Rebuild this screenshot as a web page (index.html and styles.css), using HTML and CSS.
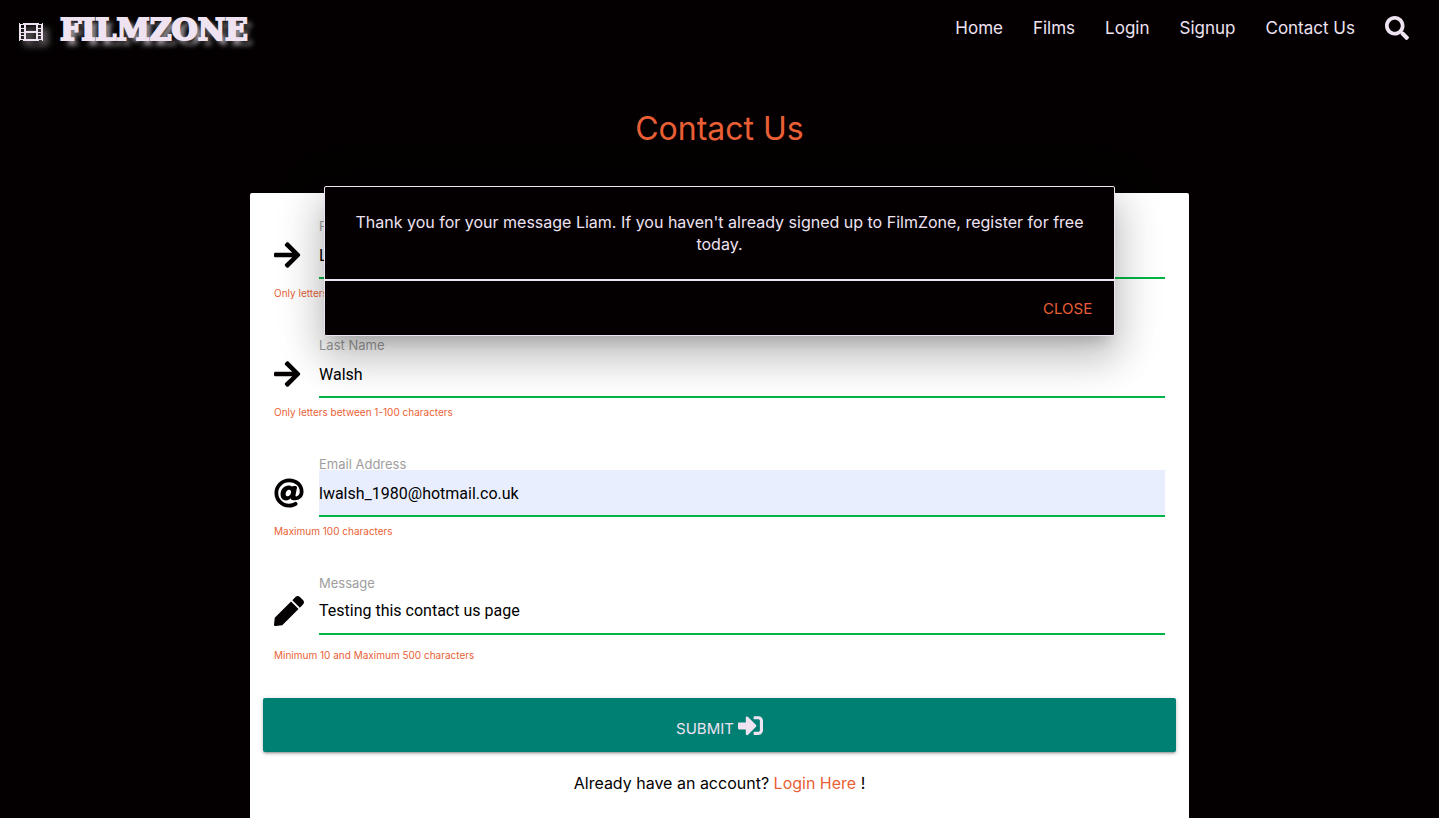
FILE: index.html
```html
<!DOCTYPE html>
<html lang="en">
<head>
<meta charset="utf-8">
<meta name="viewport" content="width=device-width, initial-scale=1">
<title>FilmZone - Contact Us</title>
<link rel="stylesheet" href="styles.css">
</head>
<body>
<header class="navbar">
  <a class="brand" href="#">
    <svg class="brand-icon" viewBox="0 0 24 18" aria-hidden="true"><path fill-rule="evenodd" d="M0 0H1V1H4V0H20V1H23V0H24V18H23V17H20V18H4V17H1V18H0ZM7 2V8H17V2ZM7 10V16H17V10ZM2 2V5H5V2ZM2 6V9H5V6ZM2 10V12H5V10ZM2 13V16H5V13ZM19 2V5H22V2ZM19 6V9H22V6ZM19 10V12H22V10ZM19 13V16H22V13Z"/></svg>
    <span class="brand-name">FILMZONE</span>
  </a>
  <nav class="nav-links">
    <a href="#">Home</a>
    <a href="#">Films</a>
    <a href="#">Login</a>
    <a href="#">Signup</a>
    <a href="#">Contact Us</a>
    <a class="nav-search" href="#" aria-label="Search"><svg viewBox="0 0 512 512" aria-hidden="true"><path d="M505 442.7L405.3 343c-4.5-4.5-10.6-7-17-7H372c27.6-35.3 44-79.7 44-128C416 93.1 322.9 0 208 0S0 93.1 0 208s93.1 208 208 208c48.3 0 92.7-16.4 128-44v16.3c0 6.4 2.5 12.5 7 17l99.7 99.7c9.4 9.4 24.6 9.4 33.9 0l28.3-28.3c9.4-9.4 9.4-24.6.1-34zM208 336c-70.7 0-128-57.2-128-128 0-70.7 57.2-128 128-128 70.7 0 128 57.2 128 128 0 70.7-57.2 128-128 128z"/></svg></a>
  </nav>
</header>

<main class="page">
  <h1 class="title">Contact Us</h1>
  <form class="card">
    <div class="field">
      <label class="field-label" for="first">First Name</label>
      <svg class="field-icon" viewBox="0 0 512 512" aria-hidden="true"><path d="M190.5 66.9l22.2-22.2c9.4-9.4 24.6-9.4 33.9 0L441 239c9.4 9.4 9.4 24.6 0 33.9L246.6 467.3c-9.4 9.4-24.6 9.4-33.9 0l-22.2-22.2c-9.5-9.5-9.3-25 .4-34.3L311.4 296H24c-13.3 0-24-10.7-24-24v-32c0-13.3 10.7-24 24-24h287.4L190.9 101.2c-9.8-9.3-10-24.8-.4-34.3z"/></svg>
      <input class="control" id="first" type="text" value="Liam">
      <span class="helper">Only letters between 1-100 characters</span>
    </div>
    <div class="field">
      <label class="field-label" for="last">Last Name</label>
      <svg class="field-icon" viewBox="0 0 512 512" aria-hidden="true"><path d="M190.5 66.9l22.2-22.2c9.4-9.4 24.6-9.4 33.9 0L441 239c9.4 9.4 9.4 24.6 0 33.9L246.6 467.3c-9.4 9.4-24.6 9.4-33.9 0l-22.2-22.2c-9.5-9.5-9.3-25 .4-34.3L311.4 296H24c-13.3 0-24-10.7-24-24v-32c0-13.3 10.7-24 24-24h287.4L190.9 101.2c-9.8-9.3-10-24.8-.4-34.3z"/></svg>
      <input class="control" id="last" type="text" value="Walsh">
      <span class="helper">Only letters between 1-100 characters</span>
    </div>
    <div class="field">
      <label class="field-label" for="email">Email Address</label>
      <svg class="field-icon" viewBox="0 0 512 512" aria-hidden="true"><path d="M256 8C118.941 8 8 118.919 8 256c0 137.059 110.919 248 248 248 48.154 0 95.342-14.14 135.408-40.223 12.005-7.815 14.625-24.288 5.552-35.372l-10.177-12.433c-7.671-9.371-21.179-11.667-31.373-5.129C325.92 429.757 291.314 440 256 440c-101.458 0-184-82.542-184-184S154.542 72 256 72c100.139 0 184 57.619 184 160 0 38.786-21.093 79.742-58.17 83.693-17.349-.454-16.91-12.857-13.476-30.024l23.433-121.11C394.653 149.75 383.308 136 368.225 136h-44.981a13.518 13.518 0 0 0-13.432 11.993l-.01.092c-14.697-17.901-40.448-21.775-59.971-21.775-74.58 0-137.831 62.234-137.831 151.46 0 65.303 36.785 105.87 96 105.87 26.984 0 57.369-15.637 74.991-38.333 9.522 34.104 40.613 34.104 70.71 34.104C462.609 379.41 504 307.798 504 232 504 95.653 394.023 8 256 8zm-21.68 304.43c-22.249 0-36.07-15.623-36.07-40.771 0-44.993 30.779-72.729 58.63-72.729 22.292 0 35.601 15.241 35.601 40.77 0 45.061-33.875 72.73-58.161 72.73z"/></svg>
      <input class="control control-filled" id="email" type="email" value="lwalsh_1980@hotmail.co.uk">
      <span class="helper">Maximum 100 characters</span>
    </div>
    <div class="field field-message">
      <label class="field-label" for="message">Message</label>
      <svg class="field-icon" viewBox="0 0 512 512" aria-hidden="true"><path d="M290.74 93.24l128.02 128.02-277.99 277.99-114.14 12.6C11.35 513.54-1.56 500.62.14 485.34l12.7-114.22 277.9-277.88zm207.2-19.06l-60.11-60.11c-18.75-18.75-49.16-18.75-67.91 0l-56.55 56.55 128.02 128.02 56.55-56.55c18.75-18.76 18.75-49.16 0-67.91z"/></svg>
      <textarea class="control" id="message" rows="1">Testing this contact us page</textarea>
      <span class="helper">Minimum 10 and Maximum 500 characters</span>
    </div>
    <button class="submit" type="submit">
      <span>SUBMIT</span>
      <svg viewBox="0 0 512 512" aria-hidden="true"><path d="M416 448h-84c-6.6 0-12-5.4-12-12v-40c0-6.6 5.4-12 12-12h84c17.7 0 32-14.3 32-32V160c0-17.7-14.3-32-32-32h-84c-6.6 0-12-5.4-12-12V76c0-6.6 5.4-12 12-12h84c53 0 96 43 96 96v192c0 53-43 96-96 96zm-47-201L201 79c-15-15-41-4.5-41 17v96H24c-13.3 0-24 10.7-24 24v96c0 13.3 10.7 24 24 24h136v96c0 21.5 26 32 41 17l168-168c9.3-9.4 9.3-24.6 0-34z"/></svg>
    </button>
    <p class="account">Already have an account? <a href="#">Login Here</a> !</p>
  </form>
</main>

<div class="modal" role="dialog" aria-labelledby="modal-text">
  <p class="modal-content" id="modal-text">Thank you for your message Liam. If you haven't already signed up to FilmZone, register for free today.</p>
  <div class="modal-footer">
    <button class="modal-close" type="button">CLOSE</button>
  </div>
</div>
</body>
</html>
```

FILE: styles.css
```css
:root {
  --black: #040001;
  --light: #efe3f2;
  --orange: #e95f35;
  --green: #00b545;
  --teal: #008073;
}

* {
  box-sizing: border-box;
}

body {
  display: flex;
  flex-direction: column;
  min-height: 100vh;
  margin: 0;
  background: var(--black);
  color: var(--black);
  font-family: Inter, "Open Sans", sans-serif;
  font-size: 16px;
}

a {
  color: inherit;
  text-decoration: none;
}

.navbar {
  display: flex;
  align-items: center;
  justify-content: space-between;
  height: 60px;
  padding: 0 30px 4px 19px;
  color: var(--light);
}

.brand {
  display: flex;
  align-items: center;
  gap: 17px;
}

.brand-icon {
  width: 24px;
  height: 18px;
  margin-top: 8px;
  fill: currentColor;
  filter: drop-shadow(5px 5px 3px #8a858b);
}

.brand-name {
  padding-top: 4px;
  font-family: "DejaVu Serif", serif;
  font-size: 30px;
  font-weight: 700;
  line-height: 40px;
  -webkit-text-stroke: 2px var(--light);
  text-shadow: 5px 5px 5px #aaa5ab;
}

.nav-links {
  display: flex;
  align-items: center;
  gap: 30px;
  font-size: 17px;
}

.nav-search svg {
  display: block;
  width: 24px;
  height: 24px;
  fill: currentColor;
}

.page {
  display: flex;
  flex: 1;
  flex-direction: column;
  padding: 0 250px;
}

.title {
  margin: 49px 0 44px;
  color: var(--orange);
  font-size: 32px;
  font-weight: 400;
  line-height: 40px;
  text-align: center;
}

.card {
  flex: 1;
  padding: 25px 13px 24px;
  border-radius: 2px 2px 0 0;
  background: #fff;
}

.field {
  display: grid;
  grid-template-columns: 45px 1fr;
  margin: 0 11px 38px;
}

.field-message {
  margin-bottom: 37px;
}

.field-label {
  grid-column: 2;
  padding-top: 2px;
  color: #9e9e9e;
  font-size: 13px;
  line-height: 12px;
}

.field-icon {
  align-self: center;
  width: 30px;
  height: 30px;
  margin-bottom: 2px;
  fill: var(--black);
}

.control {
  display: block;
  width: 100%;
  height: 47px;
  padding: 2px 0 0;
  border: 0;
  border-bottom: 2px solid var(--green);
  border-radius: 0;
  outline: 0;
  background: transparent;
  color: #000;
  font-family: Roboto, sans-serif;
  font-size: 16px;
}

.control-filled {
  background: #e8eefe;
}

textarea.control {
  height: 46px;
  padding: 12px 0;
  line-height: 20px;
  overflow: hidden;
  resize: none;
}

.helper {
  grid-column: 1 / -1;
  margin-top: 8px;
  color: var(--orange);
  font-size: 10px;
  line-height: 12px;
}

.field-message .helper {
  margin-top: 14px;
}

.submit {
  display: flex;
  align-items: center;
  justify-content: center;
  gap: 4px;
  width: 100%;
  height: 54px;
  border: 0;
  border-radius: 2px;
  background: var(--teal);
  box-shadow: 0 2px 2px 0 rgba(0, 0, 0, .14), 0 3px 1px -2px rgba(0, 0, 0, .12), 0 1px 5px 0 rgba(0, 0, 0, .2);
  color: var(--light);
  font-family: inherit;
  font-size: 15px;
}

.submit span {
  padding-top: 6px;
}

.submit svg {
  width: 25px;
  height: 25px;
  fill: currentColor;
}

.account {
  margin: 20px 0 0;
  line-height: 22px;
  text-align: center;
}

.account a {
  color: var(--orange);
}

.modal {
  position: absolute;
  top: 186px;
  right: 0;
  left: 0;
  width: 55%;
  margin: 0 auto;
  border: 1px solid var(--light);
  border-radius: 2px;
  background: var(--black);
  box-shadow: 0 24px 38px 3px rgba(0, 0, 0, .14), 0 9px 46px 8px rgba(0, 0, 0, .12), 0 11px 15px -7px rgba(0, 0, 0, .2);
}

.modal-content {
  margin: 0;
  padding: 24px;
  color: var(--light);
  line-height: 22px;
  text-align: center;
}

.modal-footer {
  display: flex;
  align-items: center;
  justify-content: flex-end;
  height: 56px;
  padding: 0 6px;
  border-top: 2px solid var(--light);
}

.modal-close {
  height: 36px;
  padding: 0 16px;
  border: 0;
  background: transparent;
  color: var(--orange);
  font-family: inherit;
  font-size: 15px;
}
```
